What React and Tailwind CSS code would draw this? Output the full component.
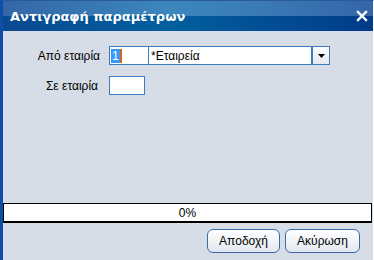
import React from "react";

export default function App() {
  const font = { fontFamily: "'DejaVu Sans', sans-serif" };
  const body = { fontFamily: "'Liberation Sans', Arial, sans-serif" };
  return (
    <div className="w-[374px] h-[260px] flex flex-col bg-[#d6dde6] border-l-[3px] border-l-[#0d4ea6] border-r border-r-white border-t border-t-[#2a5a9a] overflow-hidden" style={body}>
      {/* Title bar */}
      <div className="relative h-[30px] shrink-0 flex items-center justify-between pl-[7px] pr-[5px]">
        <div className="absolute inset-x-0 top-0 h-[15px] bg-[linear-gradient(90deg,#3567a8_0%,#3b86bd_45%,#3a7ab6_70%,#3565a8_100%)]" />
        <div className="absolute inset-x-0 bottom-0 h-[15px] bg-[linear-gradient(90deg,#0a4990_0%,#015f9f_45%,#024f96_70%,#003b88_100%)]" />
        <span className="relative text-white font-bold text-[13px] leading-none" style={font}>Αντιγραφή παραμέτρων</span>
        <svg className="relative" width="12" height="12" viewBox="0 0 12 12">
          <path d="M2 2 L10 10 M10 2 L2 10" stroke="white" strokeWidth="2.4" strokeLinecap="square" />
        </svg>
      </div>

      {/* Body */}
      <div className="flex-1 flex flex-col">
        <div className="flex items-center mt-[15px] h-[19px]">
          <span className="w-[97px] text-right text-[12px] text-black">Από εταιρία</span>
          <div className="ml-[9px] flex h-[19px]">
            <div className="w-[40px] h-[19px] bg-white border border-[#3b7bbf] flex items-center pl-[1px]">
              <span className="bg-[#3399ff] text-white text-[12px] leading-[14px] px-[1px]">1</span>
              <span className="w-[2px] h-[14px] bg-[#e06010]" />
            </div>
            <div className="w-[163px] h-[19px] bg-white border border-l-0 border-[#3b7bbf] flex items-center pl-[2px] text-[12px] text-black">*Εταιρεία</div>
            <div className="w-[18px] h-[19px] border border-[#3b7bbf] bg-[linear-gradient(180deg,#ffffff,#e4e8ee)] flex items-center justify-center">
              <svg width="7" height="4" viewBox="0 0 7 4"><path d="M0 0 H7 L3.5 4 Z" fill="black" /></svg>
            </div>
          </div>
        </div>

        <div className="flex items-center mt-[11px] h-[19px]">
          <span className="w-[95px] text-right text-[12px] text-black">Σε εταιρία</span>
          <div className="ml-[11px] w-[36px] h-[19px] bg-white border border-[#3b7bbf]" />
        </div>

        <div className="flex-1" />

        <div className="mr-px h-[20px] shrink-0 bg-white border border-black border-b-2 flex items-center justify-center text-[12px] text-black">0%</div>

        <div className="flex justify-end gap-[5px] mt-[6px] mb-[7px] mr-[13px]">
          <button className="w-[73px] h-[24px] rounded-[6px] border border-[#3b6aa8] bg-[linear-gradient(180deg,#ffffff,#e2e8f0)] text-[12px] text-black" style={body}>Αποδοχή</button>
          <button className="w-[75px] h-[24px] rounded-[6px] border border-[#3b6aa8] bg-[linear-gradient(180deg,#ffffff,#e2e8f0)] text-[12px] text-black" style={body}>Ακύρωση</button>
        </div>
      </div>
    </div>
  );
}
